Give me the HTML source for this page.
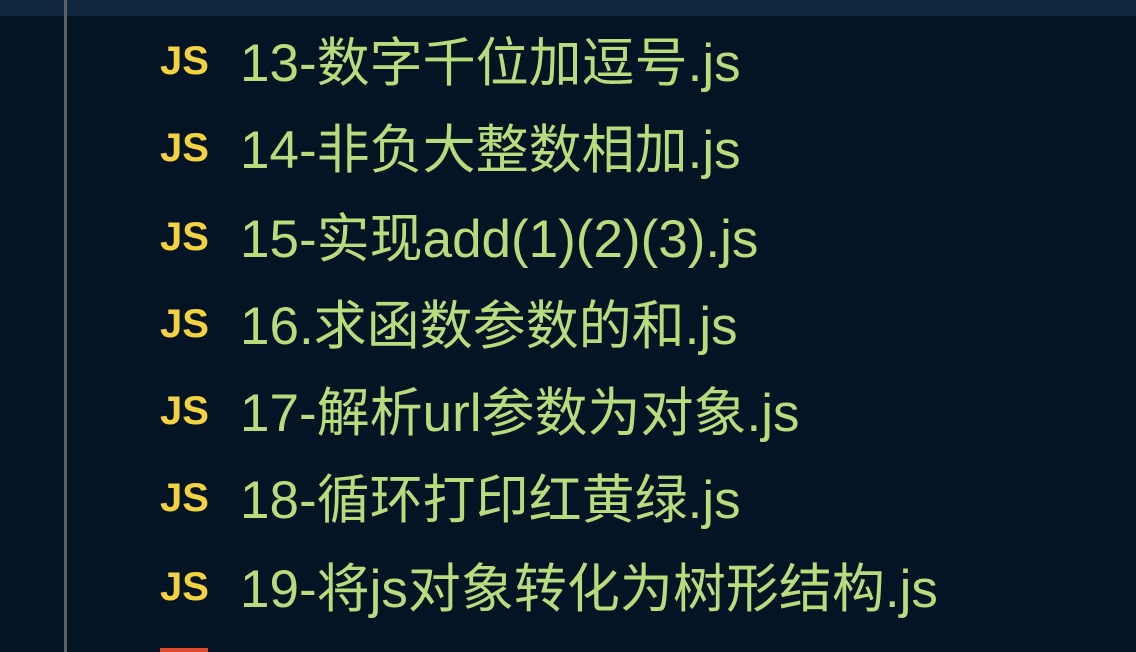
<!DOCTYPE html>
<html><head><meta charset="utf-8"><style>
html,body{margin:0;padding:0;width:1136px;height:652px;overflow:hidden;background:#041425;}
.top{position:absolute;left:0;top:0;width:1136px;height:16px;background:#10263d;}
.vl{position:absolute;left:64px;top:0;width:3px;height:652px;background:#5c5f63;}
.js{position:absolute;left:160px;font:bold 40px "Liberation Sans",sans-serif;color:#f3d23f;line-height:1;}
.t{position:absolute;left:240px;font:53px "Liberation Sans","Noto Sans CJK SC",sans-serif;color:#b7dc7c;line-height:1;white-space:nowrap;}
.red{position:absolute;left:160px;top:648px;width:48px;height:4px;background:#e2492b;}
</style></head><body>
<div class="top"></div>
<div class="vl"></div>
<div class="js" style="top:41px">JS</div><div class="t" style="top:37px">13-数字千位加逗号.js</div>
<div class="js" style="top:128px">JS</div><div class="t" style="top:124px">14-非负大整数相加.js</div>
<div class="js" style="top:217px">JS</div><div class="t" style="top:213px">15-实现add(1)(2)(3).js</div>
<div class="js" style="top:304px">JS</div><div class="t" style="top:300px">16.求函数参数的和.js</div>
<div class="js" style="top:391px">JS</div><div class="t" style="top:387px">17-解析url参数为对象.js</div>
<div class="js" style="top:478px">JS</div><div class="t" style="top:474px">18-循环打印红黄绿.js</div>
<div class="js" style="top:567px">JS</div><div class="t" style="top:563px">19-将js对象转化为树形结构.js</div>
<div class="red"></div>
</body></html>
